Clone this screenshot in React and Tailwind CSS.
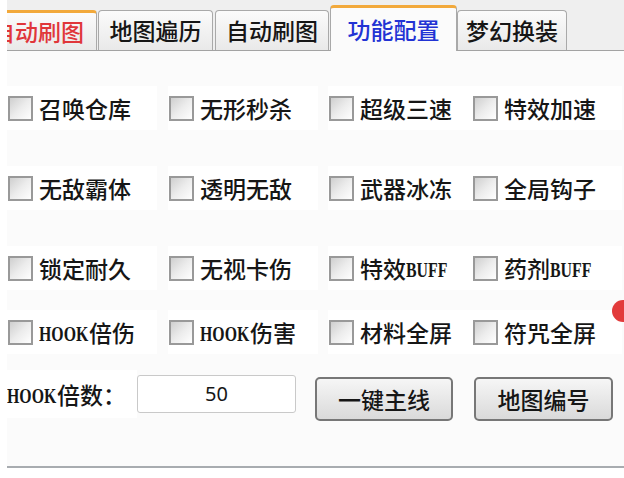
import React from "react";

const rows = [
  ["召唤仓库", "无形秒杀", "超级三速", "特效加速"],
  ["无敌霸体", "透明无敌", "武器冰冻", "全局钩子"],
  ["锁定耐久", "无视卡伤", "特效BUFF", "药剂BUFF"],
  ["HOOK倍伤", "HOOK伤害", "材料全屏", "符咒全屏"],
];

const colWidths = ["w-[161px]", "w-[160px]", "w-[144px]", "w-[150px]"];

// narrow serif latin, like the old bitmap font
function Latin({ text }) {
  const w = text === "HOOK" ? "w-[50px]" : "w-[44px]";
  return (
    <span className={"inline-block whitespace-nowrap " + w}>
      <span className="inline-block origin-left scale-x-[0.72] font-['Liberation_Serif',serif] font-bold text-[22px]">
        {text}
      </span>
    </span>
  );
}

function Label({ text }) {
  const parts = text.split(/([A-Za-z]+)/).filter(Boolean);
  return (
    <span className="flex items-center">
      {parts.map((p, i) =>
        /[A-Za-z]/.test(p) ? <Latin key={i} text={p} /> : <span key={i}>{p}</span>
      )}
    </span>
  );
}

function Check({ label }) {
  return (
    <div className="flex items-center h-[44px] bg-white w-[150px] pl-px gap-[6px]">
      <div className="w-[25px] h-[25px] border-2 border-[#999999] bg-gradient-to-br from-[#cfcfcf] via-[#ececec] to-white shrink-0"></div>
      <Label text={label} />
    </div>
  );
}

function Tab({ children, className }) {
  return (
    <div
      className={
        "h-[40px] flex items-center justify-center border border-b-0 border-[#a9a9a9] rounded-t-[4px] bg-gradient-to-b from-[#fbfbfb] to-[#e9e9e9] " +
        className
      }
    >
      {children}
    </div>
  );
}

export default function App() {
  return (
    <div className="w-[624px] h-[478px] bg-white pl-[7px] overflow-hidden relative font-['Noto_Sans_CJK_SC',sans-serif] font-medium text-[23px] text-[#161616] leading-none">

      {/* TABS */}
      <div className="h-[51px] flex items-end bg-[#efefef] border-b border-[#a3a3a3]">
        <Tab className="w-[90px] border-l-0 rounded-tl-none border-t-[3px] border-t-[#f2a93b] text-[#e0363a] !justify-end pr-[12px] overflow-hidden">
          <span className="whitespace-nowrap shrink-0">自动刷图</span>
        </Tab>
        <Tab className="w-[115px] ml-[1px]">地图遍历</Tab>
        <Tab className="w-[114px] ml-[2px]">自动刷图</Tab>
        <div className="w-[127px] h-[46px] -mb-px ml-[1px] flex items-center justify-center bg-[#fbfbfb] border border-b-0 border-[#a9a9a9] border-t-[3px] border-t-[#f2a93b] rounded-t-[4px] text-[#2233d4]">
          功能配置
        </div>
        <Tab className="w-[110px]">梦幻换装</Tab>
      </div>

      {/* PANEL */}
      <div className="h-[417px] bg-[#fbfbfb] border-b-2 border-[#a8acb0] pt-[35px] flex flex-col">
        {rows.map((row, r) => (
          <div key={r} className={"flex " + (r === 0 ? "" : r === 3 ? "mt-[20px]" : "mt-[36px]")}>
            {row.map((label, c) => (
              <div key={c} className={colWidths[c]}>
                <Check label={label} />
              </div>
            ))}
          </div>
        ))}

        {/* HOOK ROW */}
        <div className="flex items-center mt-[16px] h-[48px]">
          <div className="w-[130px] flex items-center bg-white h-[48px]">
            <Latin text="HOOK" />
            <span>倍数：</span>
          </div>
          <div className="w-[159px] h-[38px] border border-[#c9c9c9] rounded-[3px] bg-white flex items-center justify-center font-['Noto_Sans',sans-serif] font-normal text-[20px]">
            50
          </div>
          <button className="ml-[19px] w-[138px] h-[44px] border-2 border-[#777777] rounded-[5px] bg-gradient-to-b from-[#f6f6f6] to-[#dadada] flex items-center justify-center mt-[10px]">
            一键主线
          </button>
          <button className="ml-[21px] w-[139px] h-[44px] border-2 border-[#777777] rounded-[5px] bg-gradient-to-b from-[#f6f6f6] to-[#dadada] flex items-center justify-center mt-[10px]">
            地图编号
          </button>
        </div>
      </div>

      {/* red mark over the edge */}
      <div className="absolute left-[612px] top-[300px] w-[22px] h-[22px] rounded-full bg-[#e23b3b]"></div>
    </div>
  );
}
